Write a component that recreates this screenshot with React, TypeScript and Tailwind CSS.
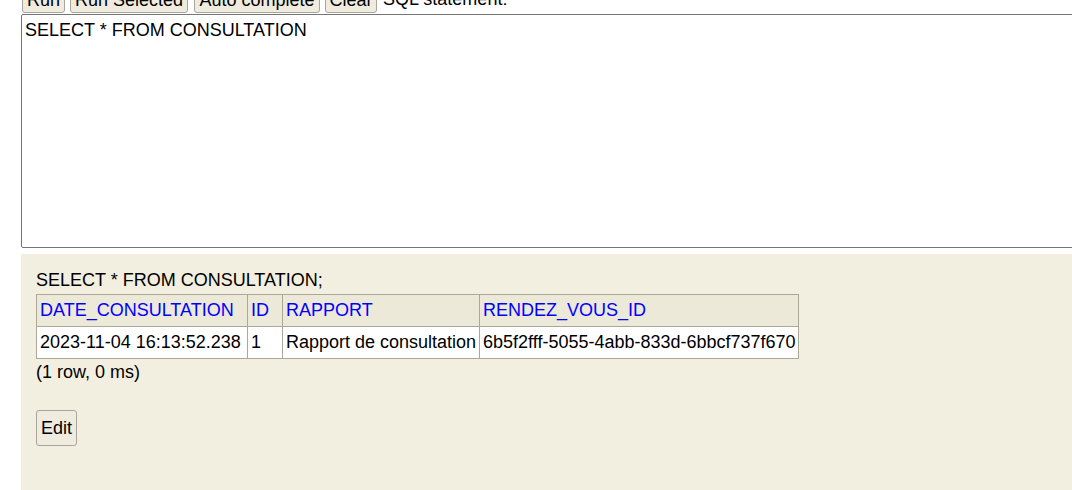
const buttonCls =
  'h-[27px] rounded-[3px] border border-[#a8a59a] bg-[#efecdf] text-[18px] leading-none text-black whitespace-nowrap';

const columns = [
  { name: 'DATE_CONSULTATION', w: 'w-[211px]' },
  { name: 'ID', w: 'w-[35px]' },
  { name: 'RAPPORT', w: 'w-[197px]' },
  { name: 'RENDEZ_VOUS_ID', w: 'w-[319px]' },
];
const rows = [['2023-11-04 16:13:52.238', '1', 'Rapport de consultation', '6b5f2fff-5055-4abb-833d-6bbcf737f670']];

export default function App() {
  return (
    <div className="h-[490px] w-screen overflow-hidden bg-white pl-[21px] font-['Liberation_Sans',Arial,sans-serif] text-[18px] text-black">
      <div className="mt-[-14px] flex items-center h-[27px]">
        <button className={`${buttonCls} w-[43px] ml-[1px]`}>Run</button>
        <button className={`${buttonCls} w-[118px] ml-[5px]`}>Run Selected</button>
        <button className={`${buttonCls} w-[126px] ml-[6px]`}>Auto complete</button>
        <button className={`${buttonCls} w-[52px] ml-[5px]`}>Clear</button>
        <span className="ml-[6px] whitespace-nowrap">SQL statement:</span>
      </div>
      <textarea
        readOnly
        defaultValue="SELECT * FROM CONSULTATION"
        className="mt-[1px] block w-[1080px] h-[234px] resize-none rounded-[2px] border border-[#767676] pl-[3px] pr-[3px] pt-[5px] pb-[3px] text-[18px] leading-[21px] outline-none font-['Liberation_Sans',Arial,sans-serif]"
      />
      <div className="mt-[6px] h-[260px] w-[1080px] bg-[#f3efe0] pl-[15px] pt-[16px]">
        <div className="leading-[21px] whitespace-nowrap">SELECT * FROM CONSULTATION;</div>
        <table className="mt-[3px] border-collapse table-fixed">
          <thead>
            <tr>
              {columns.map((c) => (
                <th
                  key={c.name}
                  className={`${c.w} border border-[#aca899] bg-[#ece9d8] pl-[3px] pr-[2px] py-[5px] text-left font-normal leading-[21px] text-[#0000ff] whitespace-nowrap`}
                >
                  {c.name}
                </th>
              ))}
            </tr>
          </thead>
          <tbody>
            {rows.map((r, i) => (
              <tr key={i}>
                {r.map((v, j) => (
                  <td key={j} className="border border-[#aca899] bg-white pl-[3px] pr-[2px] py-[5px] leading-[21px] whitespace-nowrap">
                    {v}
                  </td>
                ))}
              </tr>
            ))}
          </tbody>
        </table>
        <div className="mt-[3px] leading-[21px]">(1 row, 0 ms)</div>
        <button className="mt-[27px] h-[36px] w-[41px] rounded-[3px] border border-[#a8a59a] bg-[#efecdf] text-[18px] leading-none">
          Edit
        </button>
      </div>
    </div>
  );
}
